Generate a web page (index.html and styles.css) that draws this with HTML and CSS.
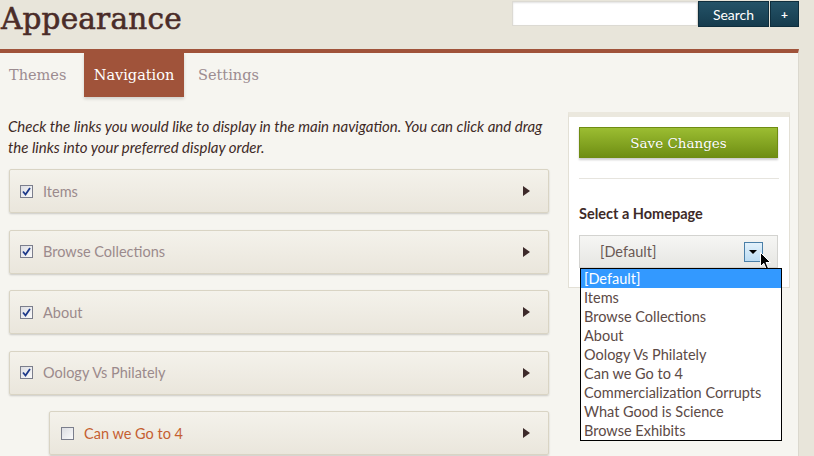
FILE: index.html
```html
<!DOCTYPE html>
<html lang="en">
<head>
<meta charset="utf-8">
<title>Appearance</title>
<link rel="stylesheet" href="styles.css">
</head>
<body>
<header class="top">
  <h1 class="title">Appearance</h1>
  <form class="search">
    <input class="search-input" type="text">
    <button class="search-btn" type="button">Search</button>
    <button class="adv-btn" type="button">+</button>
  </form>
</header>
<main class="panel">
  <nav class="tabs">
    <a class="tab">Themes</a>
    <a class="tab active">Navigation</a>
    <a class="tab">Settings</a>
  </nav>
  <div class="content">
    <section class="main-col">
      <p class="intro">Check the links you would like to display in the main navigation. You can click and drag the links into your preferred display order.</p>
      <ul class="nav-list">
        <li class="nav-item"><span class="cb checked"><svg viewBox="0 0 9 9" width="9" height="9"><path d="M1 4.5 L3.5 7.5 L8 1" fill="none" stroke="#1e3a8a" stroke-width="1.8"/></svg></span><span class="label">Items</span><span class="arrow"></span></li>
        <li class="nav-item"><span class="cb checked"><svg viewBox="0 0 9 9" width="9" height="9"><path d="M1 4.5 L3.5 7.5 L8 1" fill="none" stroke="#1e3a8a" stroke-width="1.8"/></svg></span><span class="label">Browse Collections</span><span class="arrow"></span></li>
        <li class="nav-item"><span class="cb checked"><svg viewBox="0 0 9 9" width="9" height="9"><path d="M1 4.5 L3.5 7.5 L8 1" fill="none" stroke="#1e3a8a" stroke-width="1.8"/></svg></span><span class="label">About</span><span class="arrow"></span></li>
        <li class="nav-item"><span class="cb checked"><svg viewBox="0 0 9 9" width="9" height="9"><path d="M1 4.5 L3.5 7.5 L8 1" fill="none" stroke="#1e3a8a" stroke-width="1.8"/></svg></span><span class="label">Oology Vs Philately</span><span class="arrow"></span></li>
        <li class="nav-item child"><span class="cb"></span><span class="label off">Can we Go to 4</span><span class="arrow"></span></li>
      </ul>
    </section>
    <aside class="sidebar">
      <button class="save-btn" type="button">Save Changes</button>
      <hr class="divider">
      <h2 class="side-title">Select a Homepage</h2>
      <div class="select">
        <span class="select-value">[Default]</span>
        <span class="select-arrow"></span>
        <svg class="cursor" width="12" height="19" viewBox="0 0 12 19"><path d="M0.5 0.5 L0.5 14.5 L3.8 11.3 L6.3 17.3 L8.5 16.3 L6 10.5 L10.5 10.5 Z" fill="#000" stroke="#fff" stroke-width="1"/></svg>
        <ul class="select-list">
          <li class="opt selected">[Default]</li>
          <li class="opt">Items</li>
          <li class="opt">Browse Collections</li>
          <li class="opt">About</li>
          <li class="opt">Oology Vs Philately</li>
          <li class="opt">Can we Go to 4</li>
          <li class="opt">Commercialization Corrupts</li>
          <li class="opt">What Good is Science</li>
          <li class="opt">Browse Exhibits</li>
        </ul>
      </div>
    </aside>
  </div>
</main>
</body>
</html>
```
FILE: styles.css
```css
* { box-sizing: border-box; }
html, body { margin: 0; padding: 0; }
body {
  background: #e8e5da;
  font-family: Lato, "Open Sans", sans-serif;
  width: 814px;
  height: 456px;
  overflow: hidden;
}
.top {
  width: 799px;
  height: 49px;
  display: flex;
  justify-content: space-between;
  align-items: flex-start;
}
.title {
  margin: 0 0 0 1px;
  font-family: "DejaVu Serif", serif;
  font-weight: normal;
  font-size: 29.5px;
  line-height: 38px;
  color: #4a2c28;
  -webkit-text-stroke: 0.6px #4a2c28;
  letter-spacing: 0.2px;
}
.search {
  display: flex;
  margin: 1px 0 0 0;
  height: 26px;
}
.search-input {
  width: 186px;
  height: 25px;
  border: 1px solid #dcdad3;
  background: #fff;
  box-shadow: inset 0 1px 2px rgba(0,0,0,0.12);
  margin: 0;
  padding: 0;
}
.search-btn, .adv-btn {
  height: 26px;
  border: 1px solid #0f2e3d;
  background: linear-gradient(#245368, #163c4e);
  color: #fff;
  font-family: Lato, sans-serif;
  font-size: 14px;
  margin: 0;
  padding: 0;
}
.search-btn { width: 71px; }
.adv-btn { width: 29px; margin-left: 1px; font-size: 12px; font-weight: bold; }
.panel {
  width: 799px;
  height: 407px;
  background: #f6f5f0;
  border-top: 4px solid #a0533a;
  border-right: 1px solid #dbd8ce;
  overflow: hidden;
}
.tabs {
  display: flex;
  height: 44px;
}
.tab {
  font-family: "DejaVu Serif", serif;
  font-size: 14.5px;
  line-height: 44px;
  color: #9c8c90;
  display: block;
}
.tab:first-child { width: 84px; padding-left: 9px; }
.tab.active {
  width: 100px;
  text-align: center;
  background: #a0533a;
  color: #fff;
  box-shadow: 0 2px 3px rgba(0,0,0,0.15);
  margin-right: 14px;
}
.content {
  display: flex;
  align-items: flex-start;
  padding-left: 9px;
}
.main-col {
  width: 540px;
  padding-top: 19px;
}
.intro {
  margin: 0 0 11px -1px;
  font-style: italic;
  font-size: 15px;
  line-height: 21px;
  color: #3e2a26;
}
.nav-list {
  list-style: none;
  margin: 0;
  padding: 0;
}
.nav-item {
  height: 44px;
  margin-bottom: 16.5px;
  border: 1px solid #d9d4c4;
  border-radius: 2px;
  background: linear-gradient(#f4f2eb, #eae6dc);
  box-shadow: 0 1px 2px rgba(0,0,0,0.18);
  display: flex;
  align-items: center;
  padding: 0 18px 0 10px;
}
.nav-item.child { margin-left: 40px; padding-left: 11px; }
.cb {
  width: 13px;
  height: 13px;
  border: 1px solid #7b7e8c;
  background: linear-gradient(135deg, #dcdde2, #fafafa);
  display: flex;
  align-items: center;
  justify-content: center;
  flex-shrink: 0;
}
.cb svg { display: block; }
.label {
  margin-left: 10px;
  font-size: 14.5px;
  color: #9b8a8c;
  flex: 1;
}
.label.off { color: #c55f31; }
.arrow {
  width: 0;
  height: 0;
  border-top: 5px solid transparent;
  border-bottom: 5px solid transparent;
  border-left: 7px solid #3d2a2a;
}
.sidebar {
  margin-top: 15px;
  margin-left: 19px;
  width: 222px;
  background: #fff;
  border: 1px solid #e3e0d6;
  border-top: 5px solid #ebe8de;
  padding: 10px 10px 19px 10px;
}
.save-btn {
  display: block;
  width: 199px;
  height: 31px;
  border: 1px solid #6f8c12;
  background: linear-gradient(#9bbd32, #6f8e13);
  color: #fff;
  font-family: "DejaVu Serif", serif;
  font-size: 13.5px;
  text-shadow: 0 0 1px rgba(60,80,0,0.5);
  box-shadow: 0 2px 2px rgba(0,0,0,0.2);
  margin: 0;
  padding: 0;
}
.divider {
  border: 0;
  border-top: 1px solid #e6e4de;
  margin: 20px 0 0 0;
  height: 0;
}
.side-title {
  margin: 26px 0 0 0;
  font-size: 14.5px;
  line-height: 18px;
  font-weight: bold;
  color: #3e2a28;
}
.select {
  position: relative;
  margin-top: 12px;
  width: 199px;
  height: 33px;
  border: 1px solid #d3d3d0;
  background: linear-gradient(#f6f6f4, #e6e6e3);
  display: flex;
  align-items: center;
  padding-left: 20px;
}
.select-value {
  font-size: 14.5px;
  color: #6a5955;
  flex: 1;
}
.select-arrow {
  width: 19px;
  height: 20px;
  margin-right: 14px;
  border: 1px solid #4a7fa8;
  background: linear-gradient(#e3f1fb, #bcdcf3);
  position: relative;
}
.select-arrow::after {
  content: "";
  position: absolute;
  left: 4px;
  top: 7px;
  border-left: 4px solid transparent;
  border-right: 4px solid transparent;
  border-top: 4px solid #000;
}
.cursor {
  position: absolute;
  left: 180px;
  top: 16px;
}
.select-list {
  position: absolute;
  left: 0;
  top: 32px;
  width: 202px;
  margin: 0;
  padding: 0;
  list-style: none;
  background: #fff;
  border: 1px solid #000;
  z-index: 5;
}
.opt {
  height: 19px;
  line-height: 19px;
  padding-left: 3px;
  font-size: 14.5px;
  color: #5c4a46;
  white-space: nowrap;
}
.opt.selected { background: #3399ff; color: #fff; }
```
